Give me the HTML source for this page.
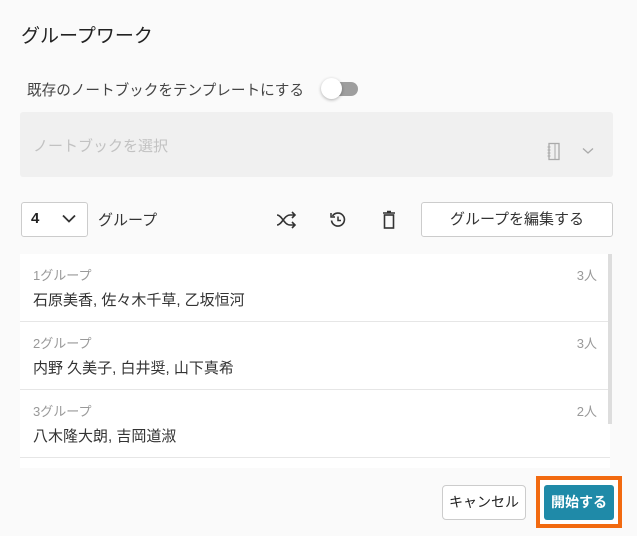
<!DOCTYPE html>
<html><head><meta charset="utf-8"><style>
body{margin:0;width:637px;height:536px;background:#fafafa;font-family:"Liberation Sans","Noto Sans CJK JP",sans-serif;color:#333;position:relative;overflow:hidden}
.a{position:absolute}
</style></head><body>
<div class="a" style="left:21px;top:21px;font-size:19px;color:#222">グループワーク</div>
<div class="a" style="left:27px;top:79px;font-size:14.6px;color:#444">既存のノートブックをテンプレートにする</div>
<div class="a" style="left:328px;top:82px;width:30px;height:14px;border-radius:7px;background:#9e9e9e"></div>
<div class="a" style="left:321px;top:78px;width:21px;height:21px;border-radius:50%;background:#fff;box-shadow:0 1px 3px rgba(0,0,0,.3)"></div>
<div class="a" style="left:20px;top:112px;width:593px;height:65px;background:#f0f0f0;border-radius:3px"></div>
<div class="a" style="left:33px;top:135px;font-size:15px;color:#c2c2c2">ノートブックを選択</div>
<svg class="a" style="left:546px;top:142px" width="16" height="20" viewBox="0 0 16 20"><rect x="3" y="1.5" width="10" height="16" fill="none" stroke="#aaa" stroke-width="1.3"/><line x1="9" y1="1.5" x2="9" y2="17.5" stroke="#aaa"/><path d="M1.5 5h3M1.5 8h3M1.5 11h3M1.5 14h3" stroke="#aaa"/></svg>
<svg class="a" style="left:582px;top:147px" width="12" height="8"><path d="M1 1.5l5 4.5 5-4.5" fill="none" stroke="#aaa" stroke-width="1.3"/></svg>
<div class="a" style="left:21px;top:202px;width:67px;height:35px;border:1px solid #ccc;border-radius:3px;background:#fff;box-sizing:border-box"></div>
<div class="a" style="left:31px;top:210px;font-size:15px;font-weight:bold;color:#222">4</div>
<svg class="a" style="left:62px;top:214px" width="14" height="9"><path d="M1 1.5l6 6 6-6" fill="none" stroke="#333" stroke-width="1.8"/></svg>
<div class="a" style="left:98px;top:209px;font-size:15px;color:#333">グループ</div>
<svg class="a" style="left:275px;top:211px" width="22" height="18" viewBox="0 0 22 18"><path d="M2 4c5 0 7 10 13 10h5M2 14c5 0 7-10 13-10h5M17 1l3 3-3 3M17 11l3 3-3 3" fill="none" stroke="#333" stroke-width="1.6"/></svg>
<svg class="a" style="left:329px;top:211px" width="18" height="18" viewBox="0 0 18 18"><path d="M3.5 5A6.5 6.5 0 1 1 2.5 9.5" fill="none" stroke="#333" stroke-width="1.6"/><path d="M2 2v4h4" fill="none" stroke="#333" stroke-width="1.5"/><path d="M9 5.5v4h3" fill="none" stroke="#333" stroke-width="1.5"/></svg>
<svg class="a" style="left:381px;top:210px" width="16" height="20" viewBox="0 0 16 20"><path d="M2 3h12M6 1.5h4" stroke="#333" stroke-width="1.6"/><rect x="3.5" y="5" width="9" height="13" fill="none" stroke="#333" stroke-width="1.6"/></svg>
<div class="a" style="left:421px;top:202px;width:192px;height:35px;border:1px solid #ccc;border-radius:3px;background:#fff;box-sizing:border-box;text-align:center;line-height:33px;font-size:15px;color:#333">グループを編集する</div>
<div class="a" style="left:20px;top:254px;width:590px;height:214px;background:#fff;overflow:hidden">
 <div style="height:67px;border-bottom:1px solid #e6e6e6;position:relative"><div class="a" style="left:13px;top:11px;font-size:13px;color:#999">1グループ</div><div class="a" style="right:13px;top:11px;font-size:13px;color:#999">3人</div><div class="a" style="left:13px;top:35px;font-size:15px;color:#333">石原美香, 佐々木千草, 乙坂恒河</div></div>
 <div style="height:67px;border-bottom:1px solid #e6e6e6;position:relative"><div class="a" style="left:13px;top:11px;font-size:13px;color:#999">2グループ</div><div class="a" style="right:13px;top:11px;font-size:13px;color:#999">3人</div><div class="a" style="left:13px;top:35px;font-size:15px;color:#333">内野 久美子, 白井奨, 山下真希</div></div>
 <div style="height:67px;border-bottom:1px solid #e6e6e6;position:relative"><div class="a" style="left:13px;top:11px;font-size:13px;color:#999">3グループ</div><div class="a" style="right:13px;top:11px;font-size:13px;color:#999">2人</div><div class="a" style="left:13px;top:35px;font-size:15px;color:#333">八木隆大朗, 吉岡道淑</div></div>
</div>
<div class="a" style="left:608px;top:254px;width:4px;height:170px;background:#ddd"></div>
<div class="a" style="left:442px;top:485px;width:84px;height:35px;border:1px solid #ccc;border-radius:4px;background:#fff;box-sizing:border-box;text-align:center;line-height:33px;font-size:14px;color:#222">キャンセル</div>
<div class="a" style="left:536px;top:476px;width:86px;height:52px;background:#f26a10"></div>
<div class="a" style="left:540px;top:480px;width:78px;height:44px;background:#fff"></div>
<div class="a" style="left:544px;top:485px;width:70px;height:35px;background:#1f8aa8;border-radius:3px;text-align:center;line-height:35px;font-size:14px;font-weight:bold;color:#fff">開始する</div>
</body></html>
